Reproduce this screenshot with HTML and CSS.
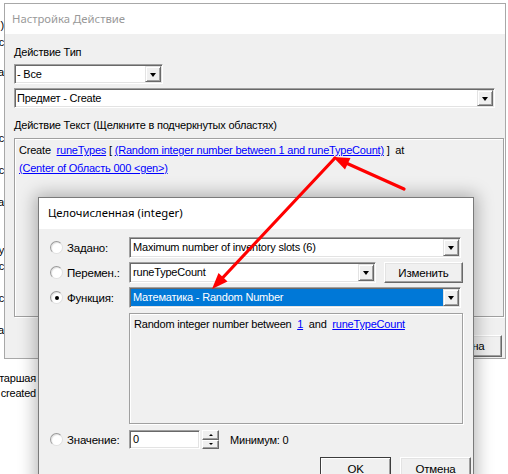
FILE: index.html
```html
<!DOCTYPE html>
<html>
<head>
<meta charset="utf-8">
<link rel="stylesheet" href="styles.css">
</head>
<body>
<div class="desk">
  <div class="bg">
    <div class="fr">)</div>
    <div class="fr">c</div>
    <div class="fr">a</div>
    <div class="fr">c</div>
    <div class="fr">c</div>
    <div class="fr">a</div>
    <div class="fr">y</div>
    <div class="fr">c</div>
    <div class="fr">c</div>
    <div class="fr">a</div>
    <div class="fr wide">Старшая</div>
    <div class="fr wide">created</div>
  </div>

  <div class="win outer">
    <div class="title inactive">Настройка Действие</div>
    <div class="obody">
      <div class="lbl l1">Действие Тип</div>
      <div class="combo c1"><span class="ctext">- Все</span><span class="dd"><i class="tri"></i></span></div>
      <div class="combo c2"><span class="ctext">Предмет - Create</span><span class="dd"><i class="tri"></i></span></div>
      <div class="lbl l2">Действие Текст (Щелкните в подчеркнутых областях)</div>
      <div class="tbox">
        <div class="tline">Create&nbsp;&nbsp;<a class="lnk">runeTypes</a> [ <a class="lnk">(Random integer number between 1 and runeTypeCount)</a> ]&nbsp;&nbsp;at</div>
        <div class="tline"><a class="lnk">(Center of Область 000 &lt;gen&gt;)</a></div>
      </div>
      <div class="obtns"><div class="btn obtn">Отмена</div></div>
    </div>
  </div>

  <div class="win inner">
    <div class="title">Целочисленная (integer)</div>
    <div class="ibody">
      <div class="rows">
        <div class="row">
          <span class="radio"></span><span class="rlbl">Задано:</span>
          <div class="combo ic wide1"><span class="ctext">Maximum number of inventory slots (6)</span><span class="dd"><i class="tri"></i></span></div>
        </div>
        <div class="row">
          <span class="radio"></span><span class="rlbl">Перемен.:</span>
          <div class="combo ic wide2"><span class="ctext">runeTypeCount</span><span class="dd"><i class="tri"></i></span></div>
          <div class="btn ebtn">Изменить</div>
        </div>
        <div class="row">
          <span class="radio on"></span><span class="rlbl">Функция:</span>
          <div class="combo ic wide1"><span class="ctext sel">Математика - Random Number</span><span class="dd"><i class="tri"></i></span></div>
        </div>
      </div>
      <div class="panel">Random integer number between&nbsp;&nbsp;<a class="lnk">1</a>&nbsp;&nbsp;and&nbsp;&nbsp;<a class="lnk">runeTypeCount</a></div>
      <div class="row vrow">
        <span class="radio"></span><span class="rlbl">Значение:</span>
        <div class="edit">0</div>
        <div class="spin"><b class="up"></b><b class="down"></b></div>
        <span class="minv">Минимум: 0</span>
      </div>
    </div>
    <div class="ibtns">
      <div class="btn def">OK</div>
      <div class="btn">Отмена</div>
    </div>
  </div>

  <svg class="arrows" width="508" height="474" viewBox="0 0 508 474">
    <line x1="404" y1="189" x2="345" y2="162.5" stroke="#ff0000" stroke-width="3.2" stroke-linecap="round"/>
    <polygon points="333,157 350.5,158 345,169.5" fill="#ff0000"/>
    <line x1="335" y1="158" x2="222" y2="278.5" stroke="#ff0000" stroke-width="3.2" stroke-linecap="round"/>
    <polygon points="212,289 227.5,281.5 218.5,273" fill="#ff0000"/>
  </svg>
</div>
</body>
</html>
```

FILE: styles.css
```css
* { box-sizing: border-box; }
html, body { margin: 0; padding: 0; }
body {
  width: 508px;
  height: 474px;
  overflow: hidden;
  background: #fff;
  font-family: "Liberation Sans", Arial, sans-serif;
  font-size: 11px;
  letter-spacing: -0.2px;
  color: #000;
}
.desk { position: relative; width: 508px; height: 474px; overflow: hidden; }

/* background window fragments */
.bg {
  display: grid;
  width: 37px;
  padding-top: 18px;
  grid-template-rows: 17px 30px 66px 32px 32px 48px 16px 32px 32px 48px 15px 14px;
}
.fr {
  display: flex;
  justify-content: flex-end;
  overflow: hidden;
  white-space: nowrap;
  line-height: 14px;
  padding-right: 33px;
}
.fr.wide { padding-right: 1px; }

/* windows */
.win {
  position: absolute;
  background: #f0f0f0;
  border: 1px solid #8a8a8a;
  overflow: hidden;
}
.outer { left: 4px; top: 3px; width: 502px; height: 356px; border-color: #a8a8a8; }
.inner {
  left: 38px; top: 197px; width: 436px; height: 300px;
  border-color: #7a7a7a;
  box-shadow: 0 0 16px 3px rgba(0, 0, 0, 0.28);
}
.title {
  height: 30px;
  background: #fff;
  font-family: "Noto Sans", sans-serif;
  font-size: 11.3px;
  letter-spacing: 0;
  line-height: 30px;
  padding-left: 7px;
  white-space: nowrap;
}
.title.inactive { color: #999; }
.inner .title { height: 31px; line-height: 29px; padding-left: 9px; }

/* outer body */
.obody { padding: 11px 0 0 9px; display: flex; flex-direction: column; }
.lbl { height: 14px; line-height: 14px; white-space: nowrap; }
.l2 { margin-top: 10px; }

.combo {
  display: flex;
  height: 20px;
  background: #fff;
  border: 1px solid;
  border-color: #a0a0a0 #fff #fff #a0a0a0;
  box-shadow: inset 1px 1px 0 #696969, inset -1px -1px 0 #e3e3e3;
  padding: 1px;
  flex: none;
}
.c1 { width: 149px; margin-top: 5px; }
.c2 { width: 481px; margin-top: 4px; }
.ctext {
  flex: 1;
  padding-left: 1px;
  line-height: 16px;
  white-space: nowrap;
  overflow: hidden;
}
.dd {
  width: 16px;
  flex: none;
  background: #f0f0f0;
  border: 1px solid;
  border-color: #e3e3e3 #696969 #696969 #e3e3e3;
  box-shadow: inset 1px 1px 0 #fff, inset -1px -1px 0 #a0a0a0;
  display: flex;
  align-items: center;
  justify-content: center;
}
.tri {
  display: block;
  width: 0; height: 0;
  border-left: 3.5px solid transparent;
  border-right: 3.5px solid transparent;
  border-top: 4px solid #000;
  margin-top: 1px;
}

.tbox {
  margin-top: 6px;
  width: 490px;
  height: 179px;
  border: 1px solid #a0a0a0;
  box-shadow: 1px 1px 0 #fff, inset 1px 1px 0 #fff;
  padding: 2px 0 0 4px;
}
.tline { height: 18px; line-height: 18px; white-space: nowrap; }
.lnk { color: #0000ff; text-decoration: underline; text-underline-offset: 1px; }

.obtns { display: flex; justify-content: flex-end; margin-top: 18px; padding-right: 3px; }
.obtn { width: 75px; }

.btn {
  display: flex;
  align-items: center;
  justify-content: center;
  height: 22px;
  background: #f0f0f0;
  border: 1px solid;
  border-color: #fff #696969 #696969 #fff;
  box-shadow: inset -1px -1px 0 #a0a0a0, inset 1px 1px 0 #e3e3e3;
  white-space: nowrap;
  flex: none;
  font-size: 11.5px;
}
.btn.def {
  border-color: #3c3c3c;
  box-shadow: inset 1px 1px 0 #fff, inset -1px -1px 0 #a0a0a0;
}

/* inner body */
.ibody { padding: 8px 0 0 11px; }
.rows { display: flex; flex-direction: column; gap: 4px; }
.row { display: flex; align-items: center; height: 21px; }
.radio {
  width: 13px; height: 13px;
  border-radius: 50%;
  background: #fff;
  border: 1px solid;
  border-color: #9a9a9a #e0e0e0 #e0e0e0 #9a9a9a;
  box-shadow: inset 1px 1px 1px rgba(0, 0, 0, 0.12);
  position: relative;
  flex: none;
}
.radio.on::after {
  content: "";
  position: absolute;
  left: 3.5px; top: 3.5px;
  width: 4px; height: 4px;
  border-radius: 50%;
  background: #000;
}
.rlbl { width: 62px; margin-left: 4px; white-space: nowrap; flex: none; font-size: 11.5px; }
.combo.ic { height: 21px; }
.combo.ic .ctext { line-height: 17px; padding-left: 2px; }
.wide1 { width: 332px; }
.wide2 { width: 247px; }
.ctext.sel { background: #0078d7; color: #fff; }
.ebtn { width: 79px; height: 21px; margin-left: 8px; }

.panel {
  margin: 5px 0 0 79px;
  width: 334px;
  height: 111px;
  border: 1px solid #a0a0a0;
  box-shadow: 1px 1px 0 #fff, inset 1px 1px 0 #fff;
  padding: 3px 4px;
  line-height: 14px;
  white-space: nowrap;
}

.vrow { margin-top: 6px; height: 19px; }
.edit {
  width: 71px; height: 19px;
  background: #fff;
  border: 1px solid;
  border-color: #a0a0a0 #fff #fff #a0a0a0;
  box-shadow: inset 1px 1px 0 #696969, inset -1px -1px 0 #e3e3e3;
  padding-left: 3px;
  line-height: 17px;
  flex: none;
}
.spin { width: 17px; height: 19px; margin-left: 2px; display: flex; flex-direction: column; flex: none; }
.spin b {
  flex: 1;
  background: #f0f0f0;
  border: 1px solid;
  border-color: #fff #696969 #696969 #fff;
  box-shadow: inset -1px -1px 0 #a0a0a0;
  display: flex;
  align-items: center;
  justify-content: center;
}
.spin .up::before {
  content: "";
  border-left: 2px solid transparent;
  border-right: 2px solid transparent;
  border-bottom: 2px solid #000;
}
.spin .down::before {
  content: "";
  border-left: 2px solid transparent;
  border-right: 2px solid transparent;
  border-top: 2px solid #000;
}
.minv { margin-left: 11px; white-space: nowrap; }

.ibtns { display: flex; justify-content: flex-end; gap: 9px; margin-top: 8px; padding-right: 2px; }
.ibtns .btn { width: 71px; height: 23px; }

.arrows { position: absolute; left: 0; top: 0; pointer-events: none; }
```
